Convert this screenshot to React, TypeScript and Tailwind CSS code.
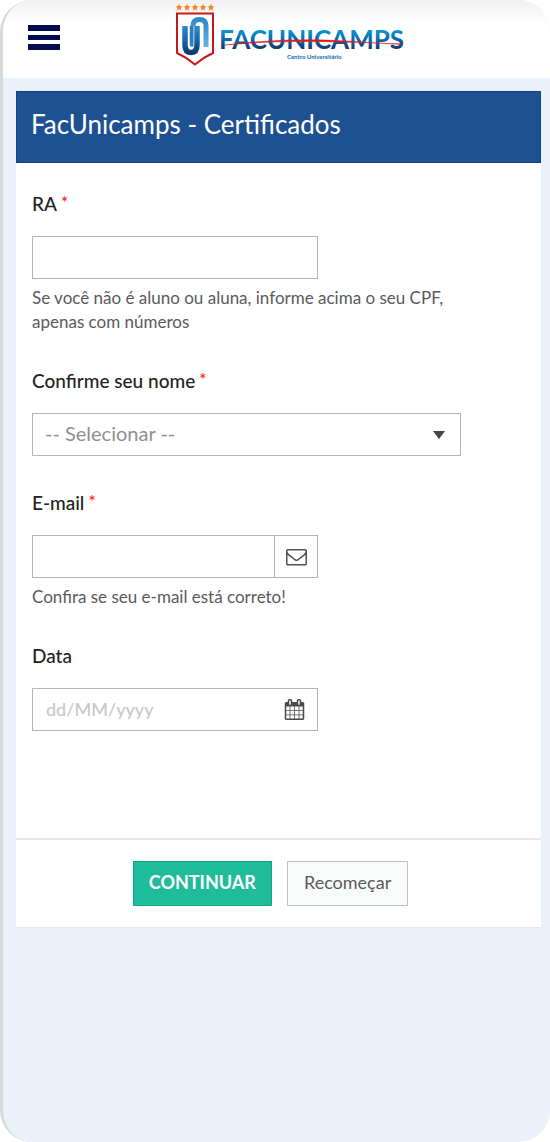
import type { ReactNode } from 'react'

const inputBox = 'h-[43px] border border-[#b4b4b4] bg-white text-xl outline-none focus:border-[#1e5191]'

function EnvelopeIcon() {
  return (
    <svg className="size-[21px]" viewBox="0 0 1792 1792" fill="#505050" aria-hidden="true">
      <path d="M1664 1504v-768q-32 36-69 66-268 206-426 338-51 43-83 67t-86.5 48.5-102.5 24.5h-2q-48 0-102.5-24.5t-86.5-48.5-83-67q-158-132-426-338-37-30-69-66v768q0 13 9.5 22.5t22.5 9.5h1472q13 0 22.5-9.5t9.5-22.5zm0-1051v-24.5l-.5-13-3-12.5-5.5-9-9-7.5-14-2.5h-1472q-13 0-22.5 9.5t-9.5 22.5q0 168 147 284 193 152 401 317 6 5 35 29.5t46 37.5 44.5 31.5 50.5 27.5 43 9h2q20 0 43-9t50.5-27.5 44.5-31.5 46-37.5 35-29.5q208-165 401-317 54-43 100.5-115.5t46.5-131.5zm128-37v1088q0 66-47 113t-113 47h-1472q-66 0-113-47t-47-113v-1088q0-66 47-113t113-47h1472q66 0 113 47t47 113z" />
    </svg>
  )
}

function CalendarIcon() {
  return (
    <svg className="size-[21px]" viewBox="0 0 1792 1792" fill="#4a4a4a" aria-hidden="true">
      <path d="M192 1664h288v-288h-288v288zm352 0h320v-288h-320v288zm-352-352h288v-320h-288v320zm352 0h320v-320h-320v320zm-352-384h288v-288h-288v288zm736 736h320v-288h-320v288zm-384-736h320v-288h-320v288zm768 736h288v-288h-288v288zm-384-352h320v-320h-320v320zm-352-864v-288q0-13-9.5-22.5t-22.5-9.5h-64q-13 0-22.5 9.5t-9.5 22.5v288q0 13 9.5 22.5t22.5 9.5h64q13 0 22.5-9.5t9.5-22.5zm736 864h288v-320h-288v320zm-384-384h320v-288h-320v288zm384 0h288v-288h-288v288zm32-480v-288q0-13-9.5-22.5t-22.5-9.5h-64q-13 0-22.5 9.5t-9.5 22.5v288q0 13 9.5 22.5t22.5 9.5h64q13 0 22.5-9.5t9.5-22.5zm384-64v1280q0 52-38 90t-90 38h-1408q-52 0-90-38t-38-90v-1280q0-52 38-90t90-38h128v-96q0-66 47-113t113-47h64q66 0 113 47t47 113v96h384v-96q0-66 47-113t113-47h64q66 0 113 47t47 113v96h128q52 0 90 38t38 90z" />
    </svg>
  )
}

function Logo() {
  return (
    <svg className="h-[68px] w-[236px]" viewBox="0 0 236 68" role="img" aria-label="FacUnicamps Centro Universitário">
      <defs>
        <linearGradient id="word" gradientUnits="userSpaceOnUse" x1="0" y1="28" x2="0" y2="50">
          <stop offset="0" stopColor="#00a3e4" />
          <stop offset="0.5" stopColor="#0a6cae" />
          <stop offset="1" stopColor="#0d3566" />
        </linearGradient>
        <linearGradient id="mark" gradientUnits="userSpaceOnUse" x1="0" y1="24" x2="0" y2="56">
          <stop offset="0" stopColor="#2f8fd0" />
          <stop offset="0.5" stopColor="#1768a8" />
          <stop offset="1" stopColor="#0b2f60" />
        </linearGradient>
        <linearGradient id="arch" gradientUnits="userSpaceOnUse" x1="0" y1="17" x2="0" y2="48">
          <stop offset="0" stopColor="#2a86c6" />
          <stop offset="1" stopColor="#6db2e2" />
        </linearGradient>
      </defs>

      {/* stars */}
      {[4, 12, 20, 28, 36].map(x => (
        <path
          key={x}
          transform={`translate(${x} 7.5) scale(1.25)`}
          fill="#f5821f"
          d="M0-3 .9-1h2L1.200.4 1.900 2.600 0 1.300-1.900 2.600-1.200.4-2.900-1h2z"
        />
      ))}

      {/* shield */}
      <path d="M2 13.500H38V53Q29 57 20 64.500 11 57 2 53Z" fill="#fff" stroke="#c8161d" strokeWidth="2" />
      <path d="M18 47V26Q18 19.500 24.500 19.500 31 19.500 31 26V47" fill="none" stroke="url(#arch)" strokeWidth="5" />
      <path d="M10 26V45Q10 52.500 16 52.500 22 52.500 22 45V26" fill="none" stroke="#fff" strokeWidth="7" />
      <path d="M10 26V45Q10 52.500 16 52.500 22 52.500 22 45V26" fill="none" stroke="url(#mark)" strokeWidth="5.500" />
      <path d="M16.500 26V46" stroke="#2b7fc0" strokeWidth="3.500" />

      <text x="44" y="49" fill="url(#word)" className="font-['Lato'] text-[26px] font-bold">FACUNICAMPS</text>
      <path d="M50 45Q115 37 172 41T228 44Q170 41.500 128 41.500T50 45Z" fill="#e0191f" stroke="#e0191f" strokeWidth="0.500" />
      <text x="112" y="59" fill="#1a78b8" className="font-['Lato'] text-[6px] font-black">Centro Universitário</text>
    </svg>
  )
}

type FieldProps = {
  id: string
  label: string
  required?: boolean
  hint?: string
  children: ReactNode
}

function Field({ id, label, required, hint, children }: FieldProps) {
  return (
    <div>
      <label htmlFor={id} className="mb-5 flex gap-1 text-[19px] leading-6 font-medium text-[#222]">
        {label}
        {required && <span className="text-[17px] leading-[22px] text-[#ff2020]">*</span>}
      </label>
      {children}
      {hint && <p className="mt-[7px] max-w-[429px] text-[17px] leading-6 text-[#5a5a5a]">{hint}</p>}
    </div>
  )
}

export default function App() {
  return (
    <div className="bg-white font-['Lato',sans-serif]">
      <div className="min-h-screen overflow-hidden rounded-[32px] border-l-3 border-[#d5dbdd] bg-[#eaf1fb]">
        <header className="relative flex h-[78px] items-start justify-center bg-linear-to-b from-[#f1f1f1] to-white to-30%">
          <button type="button" aria-label="Menu" className="absolute top-[25px] left-[25px] flex w-8 flex-col gap-1">
            <span className="h-[6px] bg-[#040b4f]" />
            <span className="h-[5px] bg-[#040b4f]" />
            <span className="h-[6px] bg-[#040b4f]" />
          </button>
          <div className="pl-8">
            <Logo />
          </div>
        </header>

        <form className="mt-[13px] mr-[9px] ml-[13px] border-b border-[#e8e8e8] bg-white" onSubmit={e => e.preventDefault()}>
          <div className="flex h-[72px] items-center border border-[#15427f] bg-[#1e5191] px-[14px] pb-[6px]">
            <h1 className="text-[26px] text-white">FacUnicamps - Certificados</h1>
          </div>

          <div className="flex flex-col gap-[35px] px-4 pt-[29px] pb-[107px]">
            <Field id="ra" label="RA" required hint="Se você não é aluno ou aluna, informe acima o seu CPF, apenas com números">
              <input id="ra" type="text" className={`${inputBox} block w-[286px] px-3 text-[#555]`} />
            </Field>

            <Field id="nome" label="Confirme seu nome" required>
              <div className="relative w-[429px] max-w-full">
                <select id="nome" className={`${inputBox} block w-full appearance-none px-3 pb-1 text-[#8f8f8f]`}>
                  <option>-- Selecionar --</option>
                </select>
                <svg className="pointer-events-none absolute top-[18px] right-4 h-2 w-3" viewBox="0 0 12 8" fill="#444">
                  <path d="M0 0h12L6 8z" />
                </svg>
              </div>
            </Field>

            <Field id="email" label="E-mail" required hint="Confira se seu e-mail está correto!">
              <div className="flex w-[286px]">
                <input id="email" type="email" className={`${inputBox} min-w-0 flex-1 px-3 text-[#555]`} />
                <span className="flex h-[43px] w-[43px] items-center justify-center border border-l-0 border-[#b4b4b4]">
                  <EnvelopeIcon />
                </span>
              </div>
            </Field>

            <Field id="data" label="Data">
              <div className="relative w-[286px]">
                <input id="data" type="text" placeholder="dd/MM/yyyy" className={`${inputBox} block w-full pr-12 pb-1 pl-[13px] text-[#555] placeholder:text-lg placeholder:font-medium placeholder:text-[#c8c8c8]`} />
                <button type="button" aria-label="Abrir calendário" className="absolute top-[11px] right-[13px]">
                  <CalendarIcon />
                </button>
              </div>
            </Field>
          </div>

          <div className="flex justify-center gap-[15px] border-t-2 border-[#e8e8e8] pt-[21px] pr-4 pb-[21px]">
            <button type="submit" className="h-[45px] border border-[#12a886] bg-[#1fbc9c] px-[15px] pb-1 text-lg font-bold text-white">
              CONTINUAR
            </button>
            <button type="reset" className="h-[45px] border border-[#c0c0c0] bg-[#f9fbfa] px-4 pb-1 text-lg text-[#5a5a5a]">
              Recomeçar
            </button>
          </div>
        </form>
      </div>
    </div>
  )
}
